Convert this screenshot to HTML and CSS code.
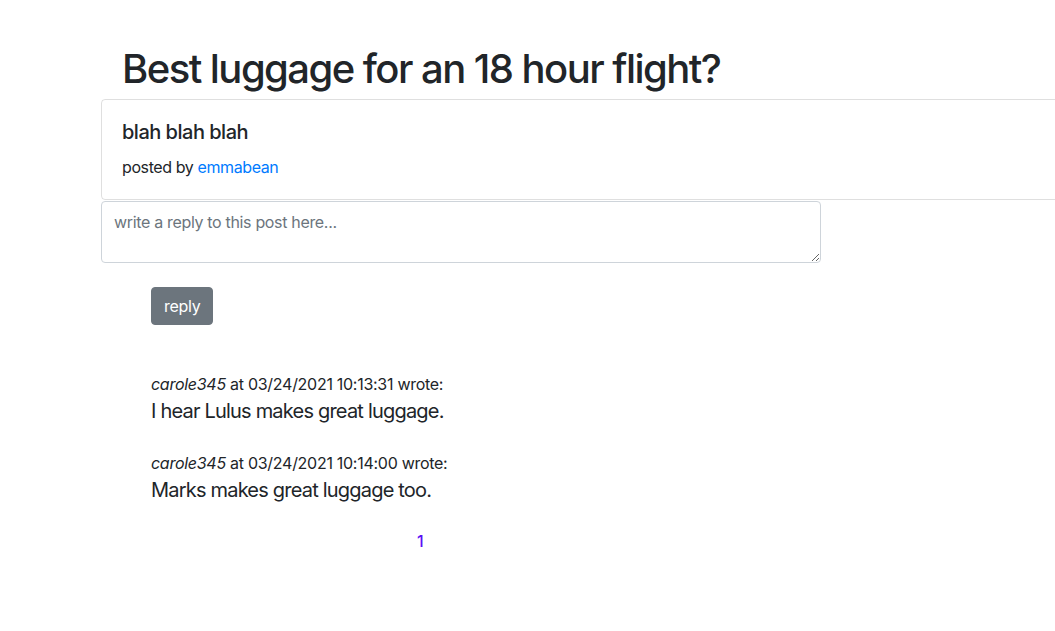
FILE: index.html
```html
<!DOCTYPE html>
<html>
<head>
<meta charset="utf-8">
<link rel="stylesheet" href="styles.css">
</head>
<body>
<div class="page">
  <h1 class="title">Best luggage for an 18 hour flight?</h1>
  <div class="card">
    <div class="card-title">blah blah blah</div>
    <div class="posted">posted by <a class="author" href="#">emmabean</a></div>
  </div>
  <textarea class="reply-box" placeholder="write a reply to this post here..."></textarea>
  <div class="actions">
    <button class="btn">reply</button>
  </div>
  <div class="comments">
    <div class="comment">
      <div class="meta"><em>carole345</em> at 03/24/2021 10:13:31 wrote:</div>
      <div class="body">I hear Lulus makes great luggage.</div>
    </div>
    <div class="comment">
      <div class="meta"><em>carole345</em> at 03/24/2021 10:14:00 wrote:</div>
      <div class="body">Marks makes great luggage too.</div>
    </div>
  </div>
  <div class="pager"><a class="page-link" href="#">1</a></div>
</div>
</body>
</html>
```
FILE: styles.css
```css
html, body {
  margin: 0;
  padding: 0;
  background: #fff;
  overflow: hidden;
}
body {
  font-family: Inter, "Helvetica Neue", Arial, sans-serif;
  color: #212529;
  font-size: 16px;
  line-height: 1.5;
}
.page {
  padding-left: 101px;
  padding-top: 45px;
}
.title {
  font-size: 40px;
  font-weight: 500;
  line-height: 48px;
  margin: 0 0 6px 21px;
  letter-spacing: -1.55px;
}
.card {
  width: 1100px;
  height: 101px;
  border: 1px solid rgba(0,0,0,0.125);
  border-radius: 4px;
  padding: 20px;
  box-sizing: border-box;
}
.card-title {
  font-size: 20px;
  font-weight: 500;
  line-height: 24px;
  letter-spacing: -0.5px;
  margin-bottom: 11px;
}
.posted {
  font-size: 16px;
  line-height: 24px;
  letter-spacing: -0.4px;
}
.author {
  color: #007bff;
  text-decoration: none;
}
.reply-box {
  display: block;
  width: 720px;
  height: 62px;
  box-sizing: border-box;
  border: 1px solid #ced4da;
  border-radius: 4px;
  padding: 8px 12px 6px;
  font-family: inherit;
  font-size: 16px;
  line-height: 24px;
  letter-spacing: -0.33px;
  color: #495057;
  margin: 1px 0 0 0;
  resize: vertical;
}
.reply-box::placeholder {
  color: #6c757d;
}
.actions {
  padding: 24px 0 0 50px;
  display: flex;
}
.btn {
  background: #6c757d;
  color: #fff;
  border: 1px solid #6c757d;
  border-radius: 4px;
  font-family: inherit;
  font-size: 16px;
  line-height: 24px;
  letter-spacing: -0.3px;
  padding: 6px 12px;
  height: 38px;
}
.comments {
  padding: 47px 0 0 50px;
  display: flex;
  flex-direction: column;
  gap: 25px;
}
.meta {
  font-size: 16px;
  line-height: 24px;
  letter-spacing: -0.28px;
}
.body {
  font-size: 20px;
  line-height: 30px;
  letter-spacing: -0.8px;
}
.pager {
  padding-left: 316px;
  margin-top: 24px;
  line-height: 24px;
}
.page-link {
  color: #5a10f5;
  text-decoration: none;
  font-size: 16px;
  font-weight: 500;
}
```
